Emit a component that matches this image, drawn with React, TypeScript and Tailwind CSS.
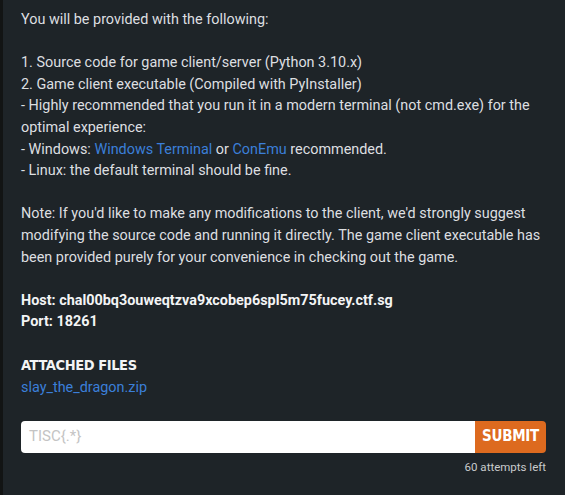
import React from "react";

export default function App() {
  return (
    <div className="w-[565px] h-[495px] bg-[#121414] flex overflow-hidden" style={{ fontFamily: "Roboto, 'Noto Sans', sans-serif" }}>
      <div className="ml-[3px] flex-1 bg-[#1e2428] pl-[18px] pr-[19px] pt-[9px]">
        <div className="text-[14.4px] leading-[21.6px] text-[#dddfe0]">
          You will be provided with the following:<br />
          <br />
          1. Source code for game client/server (Python 3.10.x)<br />
          2. Game client executable (Compiled with PyInstaller)<br />
          - Highly recommended that you run it in a modern terminal (not cmd.exe) for the optimal experience:<br />
          - Windows: <span className="text-[#3b7fd9]">Windows Terminal</span> or <span className="text-[#3b7fd9]">ConEmu</span> recommended.<br />
          - Linux: the default terminal should be fine.<br />
          <br />
          Note: If you'd like to make any modifications to the client, we'd strongly suggest modifying the source code and running it directly. The game client executable has been provided purely for your convenience in checking out the game.<br />
          <br />
          <span className="font-bold text-[#f3f4f5]">Host: chal00bq3ouweqtzva9xcobep6spl5m75fucey.ctf.sg</span><br />
          <span className="font-bold text-[#f3f4f5]">Port: 18261</span>
        </div>
        <div className="mt-[21px] text-[14.5px] leading-[23px] font-bold text-[#f3f4f5] tracking-[-0.4px]" style={{ fontFamily: "'DejaVu Sans Condensed', 'DejaVu Sans', sans-serif" }}>
          ATTACHED FILES
        </div>
        <div className="text-[14.4px] leading-[21.6px] text-[#3b7fd9]">slay_the_dragon.zip</div>
        <div className="mt-[22px] flex h-[32px]">
          <div className="flex-1 bg-white rounded-l-[4px] flex items-center pl-[8px] text-[15px] text-[#c4c4c4]">TISC{"{.*}"}</div>
          <div className="w-[71px] bg-[#dd6a1f] rounded-r-[4px] flex items-center justify-center text-white font-bold text-[15px] tracking-[-0.3px]" style={{ fontFamily: "'DejaVu Sans Condensed', 'DejaVu Sans', sans-serif" }}>
            SUBMIT
          </div>
        </div>
        <div className="mt-[5px] text-right text-[11.5px] leading-[18px] text-[#c9cbcc]">60 attempts left</div>
      </div>
    </div>
  );
}
